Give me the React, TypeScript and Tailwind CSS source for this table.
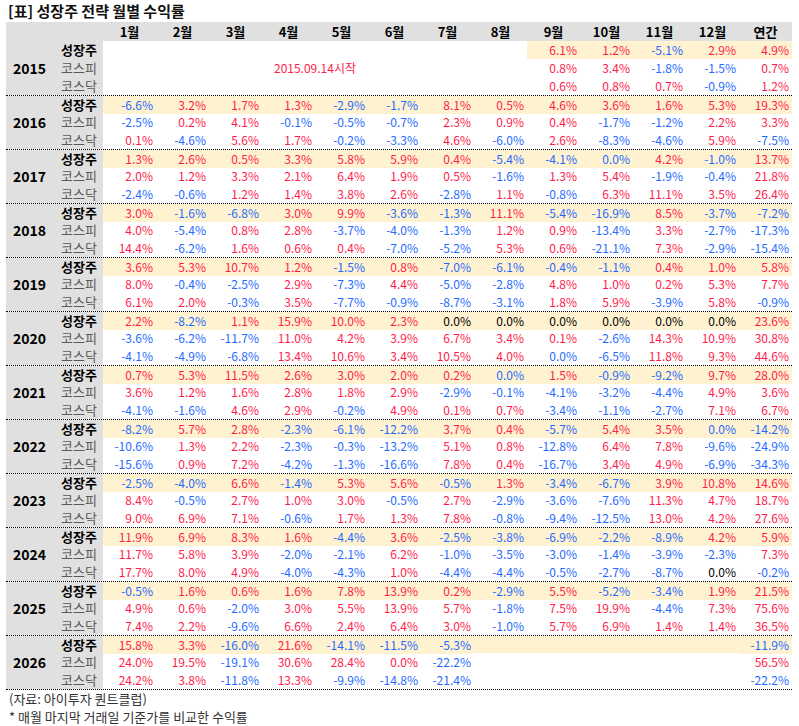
const MONTHS = ["1월", "2월", "3월", "4월", "5월", "6월", "7월", "8월", "9월", "10월", "11월", "12월", "연간"];
const LABELS = ["성장주", "코스피", "코스닥"];

// "" = empty cell, suffix k/b/r forces colour (black / blue / red)
const DATA: { year: string; rows: string[][] }[] = [
  {
    year: "2015",
    rows: [
      ["6.1", "1.2", "-5.1", "2.9", "4.9"],
      ["0.8", "3.4", "-1.8", "-1.5", "0.7"],
      ["0.6", "0.8", "0.7", "-0.9", "1.2"],
    ],
  },
  {
    year: "2016",
    rows: [
      ["-6.6", "3.2", "1.7", "1.3", "-2.9", "-1.7", "8.1", "0.5", "4.6", "3.6", "1.6", "5.3", "19.3"],
      ["-2.5", "0.2", "4.1", "-0.1", "-0.5", "-0.7", "2.3", "0.9", "0.4", "-1.7", "-1.2", "2.2", "3.3"],
      ["0.1", "-4.6", "5.6", "1.7", "-0.2", "-3.3", "4.6", "-6.0", "2.6", "-8.3", "-4.6", "5.9", "-7.5"],
    ],
  },
  {
    year: "2017",
    rows: [
      ["1.3", "2.6", "0.5", "3.3", "5.8", "5.9", "0.4", "-5.4", "-4.1", "0.0b", "4.2", "-1.0", "13.7"],
      ["2.0", "1.2", "3.3", "2.1", "6.4", "1.9", "0.5", "-1.6", "1.3", "5.4", "-1.9", "-0.4", "21.8"],
      ["-2.4", "-0.6", "1.2", "1.4", "3.8", "2.6", "-2.8", "1.1", "-0.8", "6.3", "11.1", "3.5", "26.4"],
    ],
  },
  {
    year: "2018",
    rows: [
      ["3.0", "-1.6", "-6.8", "3.0", "9.9", "-3.6", "-1.3", "11.1", "-5.4", "-16.9", "8.5", "-3.7", "-7.2"],
      ["4.0", "-5.4", "0.8", "2.8", "-3.7", "-4.0", "-1.3", "1.2", "0.9", "-13.4", "3.3", "-2.7", "-17.3"],
      ["14.4", "-6.2", "1.6", "0.6", "0.4", "-7.0", "-5.2", "5.3", "0.6", "-21.1", "7.3", "-2.9", "-15.4"],
    ],
  },
  {
    year: "2019",
    rows: [
      ["3.6", "5.3", "10.7", "1.2", "-1.5", "0.8", "-7.0", "-6.1", "-0.4", "-1.1", "0.4", "1.0", "5.8"],
      ["8.0", "-0.4", "-2.5", "2.9", "-7.3", "4.4", "-5.0", "-2.8", "4.8", "1.0", "0.2", "5.3", "7.7"],
      ["6.1", "2.0", "-0.3", "3.5", "-7.7", "-0.9", "-8.7", "-3.1", "1.8", "5.9", "-3.9", "5.8", "-0.9"],
    ],
  },
  {
    year: "2020",
    rows: [
      ["2.2", "-8.2", "1.1", "15.9", "10.0", "2.3", "0.0k", "0.0k", "0.0k", "0.0k", "0.0k", "0.0k", "23.6"],
      ["-3.6", "-6.2", "-11.7", "11.0", "4.2", "3.9", "6.7", "3.4", "0.1", "-2.6", "14.3", "10.9", "30.8"],
      ["-4.1", "-4.9", "-6.8", "13.4", "10.6", "3.4", "10.5", "4.0", "0.0b", "-6.5", "11.8", "9.3", "44.6"],
    ],
  },
  {
    year: "2021",
    rows: [
      ["0.7", "5.3", "11.5", "2.6", "3.0", "2.0", "0.2", "0.0b", "1.5", "-0.9", "-9.2", "9.7", "28.0"],
      ["3.6", "1.2", "1.6", "2.8", "1.8", "2.9", "-2.9", "-0.1", "-4.1", "-3.2", "-4.4", "4.9", "3.6"],
      ["-4.1", "-1.6", "4.6", "2.9", "-0.2", "4.9", "0.1", "0.7", "-3.4", "-1.1", "-2.7", "7.1", "6.7"],
    ],
  },
  {
    year: "2022",
    rows: [
      ["-8.2", "5.7", "2.8", "-2.3", "-6.1", "-12.2", "3.7", "0.4", "-5.7", "5.4", "3.5", "0.0b", "-14.2"],
      ["-10.6", "1.3", "2.2", "-2.3", "-0.3", "-13.2", "5.1", "0.8", "-12.8", "6.4", "7.8", "-9.6", "-24.9"],
      ["-15.6", "0.9", "7.2", "-4.2", "-1.3", "-16.6", "7.8", "0.4", "-16.7", "3.4", "4.9", "-6.9", "-34.3"],
    ],
  },
  {
    year: "2023",
    rows: [
      ["-2.5", "-4.0", "6.6", "-1.4", "5.3", "5.6", "-0.5", "1.3", "-3.4", "-6.7", "3.9", "10.8", "14.6"],
      ["8.4", "-0.5", "2.7", "1.0", "3.0", "-0.5", "2.7", "-2.9", "-3.6", "-7.6", "11.3", "4.7", "18.7"],
      ["9.0", "6.9", "7.1", "-0.6", "1.7", "1.3", "7.8", "-0.8", "-9.4", "-12.5", "13.0", "4.2", "27.6"],
    ],
  },
  {
    year: "2024",
    rows: [
      ["11.9", "6.9", "8.3", "1.6", "-4.4", "3.6", "-2.5", "-3.8", "-6.9", "-2.2", "-8.9", "4.2", "5.9"],
      ["11.7", "5.8", "3.9", "-2.0", "-2.1", "6.2", "-1.0", "-3.5", "-3.0", "-1.4", "-3.9", "-2.3", "7.3"],
      ["17.7", "8.0", "4.9", "-4.0", "-4.3", "1.0", "-4.4", "-4.4", "-0.5", "-2.7", "-8.7", "0.0k", "-0.2"],
    ],
  },
  {
    year: "2025",
    rows: [
      ["-0.5", "1.6", "0.6", "1.6", "7.8", "13.9", "0.2", "-2.9", "5.5", "-5.2", "-3.4", "1.9", "21.5"],
      ["4.9", "0.6", "-2.0", "3.0", "5.5", "13.9", "5.7", "-1.8", "7.5", "19.9", "-4.4", "7.3", "75.6"],
      ["7.4", "2.2", "-9.6", "6.6", "2.4", "6.4", "3.0", "-1.0", "5.7", "6.9", "1.4", "1.4", "36.5"],
    ],
  },
  {
    year: "2026",
    rows: [
      ["15.8", "3.3", "-16.0", "21.6", "-14.1", "-11.5", "-5.3", "", "", "", "", "", "-11.9"],
      ["24.0", "19.5", "-19.1", "30.6", "28.4", "0.0r", "-22.2", "", "", "", "", "", "56.5"],
      ["24.2", "3.8", "-11.8", "13.3", "-9.9", "-14.8", "-21.4", "", "", "", "", "", "-22.2"],
    ],
  },
];

function Cell({ v, cream }: { v: string; cream: boolean }) {
  let text = v;
  let color = "text-[#ff1c4c]";
  const last = v.slice(-1);
  if (last === "k" || last === "b" || last === "r") {
    text = v.slice(0, -1);
    color = last === "k" ? "text-black" : last === "b" ? "text-[#1f6bff]" : "text-[#ff1c4c]";
  } else if (v.startsWith("-")) {
    color = "text-[#1f6bff]";
  }
  return (
    <div
      className={`flex items-center justify-end pr-[3px] text-[12px] ${color} ${cream ? "bg-[#fff2d0]" : ""}`}
    >
      {text ? `${text}%` : ""}
    </div>
  );
}

function YearGroup({ year, rows, first }: { year: string; rows: string[][]; first: boolean }) {
  const is2015 = year === "2015";
  const heights = first ? "grid-rows-[18px_18px_18px]" : "grid-rows-[17px_18px_18px]";
  return (
    <div className={`flex ${first ? "" : "border-t border-dotted border-black"}`}>
      <div className="flex w-[45px] items-center bg-[#e0e0e0] pl-[7px] text-[14px] font-bold text-black">
        {year}
      </div>
      <div className={`grid w-[52px] bg-[#e0e0e0] ${heights}`}>
        {LABELS.map((l, i) => (
          <div
            key={l}
            className={`flex items-center justify-end pr-[6px] text-[13px] ${
              i === 0 ? "font-bold text-black" : "text-[#595959]"
            }`}
          >
            {l}
          </div>
        ))}
      </div>
      <div className={`grid grid-cols-[repeat(13,53px)] ${heights}`}>
        {is2015 && (
          <div className="col-span-8 row-span-3 flex items-center justify-center text-[12px] text-[#ff1c4c]">
            2015.09.14시작
          </div>
        )}
        {rows.map((r, ri) =>
          r.map((v, ci) => (
            <div
              key={`${ri}-${ci}`}
              className="grid"
              style={is2015 ? { gridColumnStart: ci + 9, gridRowStart: ri + 1 } : undefined}
            >
              <Cell v={v} cream={ri === 0} />
            </div>
          ))
        )}
      </div>
    </div>
  );
}

export default function App() {
  return (
    <div className="h-[726px] w-[799px] bg-white font-['Noto_Sans_CJK_KR','Noto_Sans',sans-serif] text-black">
      <div className="h-[22px] pl-[8px] text-[15px] font-bold leading-[22px] text-[#111]">
        [표] 성장주 전략 월별 수익률
      </div>
      <div className="ml-[6px] w-[786px]">
        <div className="flex h-[19px] bg-[#e0e0e0]">
          <div className="w-[97px]" />
          {MONTHS.map((m) => (
            <div key={m} className="flex w-[53px] items-center justify-center text-[13px] font-bold">
              {m}
            </div>
          ))}
        </div>
        {DATA.map((g, i) => (
          <YearGroup key={g.year} year={g.year} rows={g.rows} first={i === 0} />
        ))}
        <div className="border-t border-dotted border-black" />
      </div>
      <div className="pl-[9px] text-[13px] leading-[18px] text-[#333]">
        <div>(자료: 아이투자 퀀트클럽)</div>
        <div>* 매월 마지막 거래일 기준가를 비교한 수익률</div>
      </div>
    </div>
  );
}
